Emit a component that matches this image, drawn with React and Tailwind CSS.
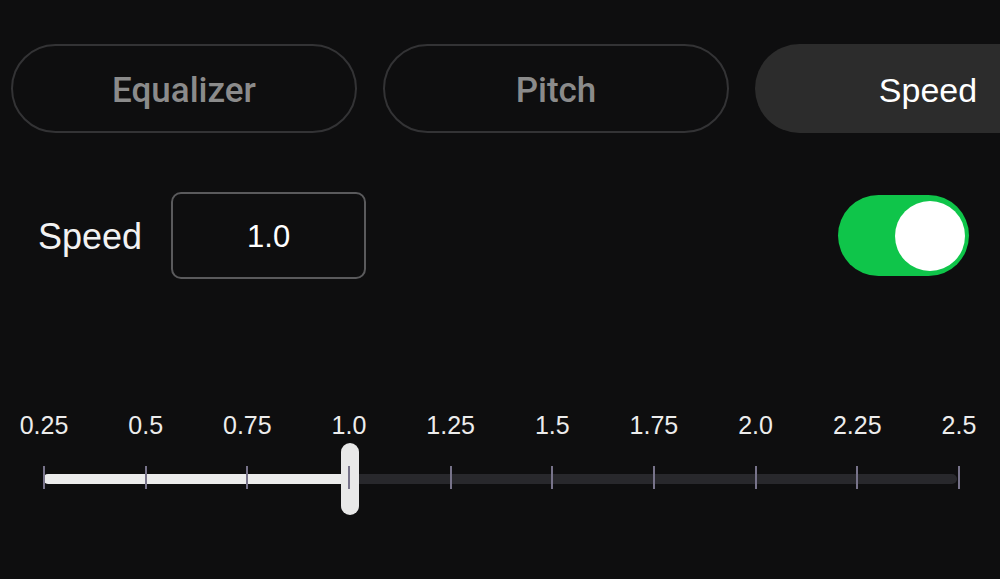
import React from 'react'

const tabs = ['Equalizer', 'Pitch', 'Speed']
const stops = ['0.25', '0.5', '0.75', '1.0', '1.25', '1.5', '1.75', '2.0', '2.25', '2.5']

function Tab({ label, active }) {
  if (active) {
    return (
      <div className="w-[346px] h-[89px] shrink-0 rounded-full bg-[#2c2c2c] flex items-center justify-center pt-[3px] text-[34px] text-white font-['Liberation_Sans',sans-serif]">
        {label}
      </div>
    )
  }
  return (
    <div className="w-[346px] h-[89px] shrink-0 rounded-full border-2 border-[#333335] flex items-center justify-center pt-[5px] text-[35px] font-medium text-[#8b8b8b] font-['Roboto',sans-serif]">
      {label}
    </div>
  )
}

function SpeedSlider({ value = 1.0, min = 0.25, max = 2.5 }) {
  const pct = ((value - min) / (max - min)) * 100

  return (
    <div className="ml-[43px] w-[917px] font-['Liberation_Sans',sans-serif]">
      {/* labels */}
      <div className="flex justify-between h-[28px] items-center">
        {stops.map((s) => (
          <div key={s} className="w-[2px] flex justify-center">
            <span className="whitespace-nowrap text-[25px] leading-none text-[#ececec]">{s}</span>
          </div>
        ))}
      </div>

      {/* track */}
      <div className="relative h-[23px] mt-[27px]">
        <div className="absolute left-0 right-[3px] top-[8px] h-[10px] rounded-full bg-[#28282c]" />
        <div
          className="absolute left-0 top-[8px] h-[10px] rounded-full bg-[#ececec]"
          style={{ width: `${pct}%` }}
        />
        <div
          className="absolute top-[-23px] w-[18px] h-[72px] -ml-[8px] rounded-full bg-[#e8e8e8]"
          style={{ left: `${pct}%` }}
        />
        <div className="absolute inset-0 flex justify-between">
          {stops.map((s) => (
            <div key={s} className="w-[2px] h-full bg-[#77738a]" />
          ))}
        </div>
      </div>
    </div>
  )
}

export default function App() {
  return (
    <div className="w-[1000px] h-[579px] overflow-hidden bg-[#0e0e0f]">
      <div className="flex gap-[26px] pt-[44px] pl-[11px]">
        {tabs.map((t) => (
          <Tab key={t} label={t} active={t === 'Speed'} />
        ))}
      </div>

      <div className="flex items-center mt-[59px] pl-[38px] pr-[31px] font-['Liberation_Sans',sans-serif]">
        <span className="text-[36px] text-[#f2f2f2] pt-[2px]">Speed</span>
        <div className="ml-[29px] w-[195px] h-[87px] rounded-[10px] border-2 border-[#5a5a5c] flex items-center justify-center pt-[4px] text-[31px] text-white">
          1.0
        </div>
        <div className="ml-auto w-[131px] h-[81px] rounded-full bg-[#0fc54a] flex items-center justify-end pr-[4px]">
          <div className="w-[70px] h-[70px] rounded-full bg-white" />
        </div>
      </div>

      <div className="mt-[132px]">
        <SpeedSlider value={1.0} />
      </div>
    </div>
  )
}
